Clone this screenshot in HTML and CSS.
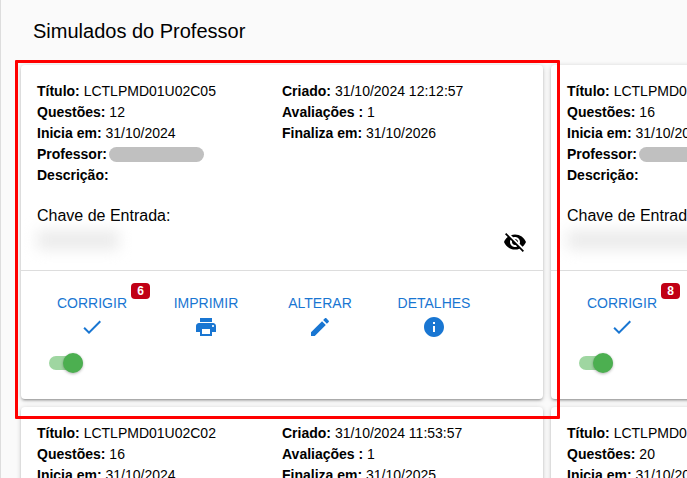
FILE: index.html
```
<!DOCTYPE html>
<html lang="pt-BR">
<head>
  <meta charset="utf-8">
  <meta name="viewport" content="width=device-width, initial-scale=1.0">
  <title>Simulados do Professor</title>
  <link rel="stylesheet" href="styles.css">
</head>
<body>
  <!-- shared icons -->
  <svg class="sprite" aria-hidden="true">
    <symbol id="icon-check" viewBox="0 0 24 24"><path d="M9 16.17L4.83 12l-1.42 1.41L9 19 21 7l-1.41-1.41z"/></symbol>
    <symbol id="icon-print" viewBox="0 0 24 24"><path d="M19 8H5c-1.66 0-3 1.34-3 3v6h4v4h12v-4h4v-6c0-1.66-1.34-3-3-3zm-3 11H8v-5h8v5zm3-7c-.55 0-1-.45-1-1s.45-1 1-1 1 .45 1 1-.45 1-1 1zm-1-9H6v4h12V3z"/></symbol>
    <symbol id="icon-edit" viewBox="0 0 24 24"><path d="M3 17.25V21h3.75L17.81 9.94l-3.75-3.75L3 17.25zM20.71 7.04c.39-.39.39-1.02 0-1.41l-2.34-2.34c-.39-.39-1.02-.39-1.41 0l-1.83 1.83 3.75 3.75 1.83-1.83z"/></symbol>
    <symbol id="icon-info" viewBox="0 0 24 24"><path d="M12 2C6.48 2 2 6.48 2 12s4.48 10 10 10 10-4.48 10-10S17.52 2 12 2zm1 15h-2v-6h2v6zm0-8h-2V7h2v2z"/></symbol>
    <symbol id="icon-hidden" viewBox="0 0 24 24"><path d="M12 7c2.76 0 5 2.24 5 5 0 .65-.13 1.26-.36 1.83l2.92 2.92c1.51-1.26 2.7-2.89 3.43-4.75-1.73-4.39-6-7.5-11-7.5-1.4 0-2.74.25-3.98.7l2.16 2.16C10.74 7.13 11.35 7 12 7zM2 4.27l2.28 2.28.46.46C3.08 8.3 1.78 10.02 1 12c1.73 4.39 6 7.5 11 7.5 1.55 0 3.03-.3 4.38-.84l.42.42L19.73 22 21 20.73 3.27 3 2 4.27zM7.53 9.8l1.55 1.55c-.05.21-.08.43-.08.65 0 1.66 1.34 3 3 3 .22 0 .44-.03.65-.08l1.55 1.55c-.67.33-1.41.53-2.2.53-2.76 0-5-2.24-5-5 0-.79.2-1.53.53-2.2zm4.31-.78l3.15 3.15.02-.16c0-1.66-1.34-3-3-3l-.17.01z"/></symbol>
  </svg>

  <main class="page">
    <h1 class="page-title">Simulados do Professor</h1>

    <div class="card-grid">
      <article class="card card-highlight">
        <div class="card-body">
          <div class="info">
            <div>
              <p><b>Título:</b> LCTLPMD01U02C05</p>
              <p><b>Questões:</b> 12</p>
              <p><b>Inicia em:</b> 31/10/2024</p>
              <p class="teacher"><b>Professor:</b><span class="redacted"></span></p>
              <p><b>Descrição:</b></p>
            </div>
            <div>
              <p><b>Criado:</b> 31/10/2024 12:12:57</p>
              <p><b>Avaliações :</b> 1</p>
              <p><b>Finaliza em:</b> 31/10/2026</p>
            </div>
          </div>
          <p class="key-label">Chave de Entrada:</p>
          <div class="key-row">
            <span class="key-value"></span>
            <button class="icon-button" type="button" aria-label="Mostrar chave"><svg class="icon"><use href="#icon-hidden"/></svg></button>
          </div>
        </div>
        <div class="card-actions">
          <div class="actions">
            <button class="action" type="button">CORRIGIR<svg class="icon"><use href="#icon-check"/></svg><span class="badge">6</span></button>
            <button class="action" type="button">IMPRIMIR<svg class="icon"><use href="#icon-print"/></svg></button>
            <button class="action" type="button">ALTERAR<svg class="icon"><use href="#icon-edit"/></svg></button>
            <button class="action" type="button">DETALHES<svg class="icon"><use href="#icon-info"/></svg></button>
          </div>
          <label class="toggle"><input class="toggle-input" type="checkbox" aria-label="Ativo" checked></label>
        </div>
      </article>

      <article class="card">
        <div class="card-body">
          <div class="info">
            <div>
              <p><b>Título:</b> LCTLPMD01U02C04</p>
              <p><b>Questões:</b> 16</p>
              <p><b>Inicia em:</b> 31/10/2024</p>
              <p class="teacher"><b>Professor:</b><span class="redacted"></span></p>
              <p><b>Descrição:</b></p>
            </div>
          </div>
          <p class="key-label">Chave de Entrada:</p>
          <div class="key-row">
            <span class="key-value key-value-long"></span>
            <button class="icon-button" type="button" aria-label="Mostrar chave"><svg class="icon"><use href="#icon-hidden"/></svg></button>
          </div>
        </div>
        <div class="card-actions">
          <div class="actions">
            <button class="action" type="button">CORRIGIR<svg class="icon"><use href="#icon-check"/></svg><span class="badge">8</span></button>
          </div>
          <label class="toggle"><input class="toggle-input" type="checkbox" aria-label="Ativo" checked></label>
        </div>
      </article>

      <article class="card">
        <div class="card-body">
          <div class="info">
            <div>
              <p><b>Título:</b> LCTLPMD01U02C02</p>
              <p><b>Questões:</b> 16</p>
              <p><b>Inicia em:</b> 31/10/2024</p>
            </div>
            <div>
              <p><b>Criado:</b> 31/10/2024 11:53:57</p>
              <p><b>Avaliações :</b> 1</p>
              <p><b>Finaliza em:</b> 31/10/2025</p>
            </div>
          </div>
        </div>
      </article>

      <article class="card">
        <div class="card-body">
          <div class="info">
            <div>
              <p><b>Título:</b> LCTLPMD01U02C01</p>
              <p><b>Questões:</b> 20</p>
              <p><b>Inicia em:</b> 31/10/2024</p>
            </div>
          </div>
        </div>
      </article>
    </div>
  </main>
</body>
</html>
```
FILE: styles.css
```
* {
  box-sizing: border-box;
}

body {
  margin: 0;
  background-color: #fafafa;
  color: #000;
  font-family: "Liberation Sans", Arial, sans-serif;
  font-size: 14px;
  line-height: 21px;
  overflow: hidden;
}

h1, p {
  margin: 0;
}

button {
  padding: 0;
  border: none;
  background: none;
  color: inherit;
  font: inherit;
  cursor: pointer;
}

.sprite {
  display: none;
}

.page {
  min-height: 100vh;
  padding: 19px 20px 20px;
  border-left: 1px solid #ddd;
}

.page-title {
  margin-bottom: 22px;
  padding-left: 12px;
  font-size: 20px;
  font-weight: normal;
  line-height: 24px;
}

.card-grid {
  display: grid;
  grid-template-columns: repeat(2, minmax(522px, 1fr));
  gap: 8px;
}

.card {
  position: relative;
  background-color: #fff;
  border-radius: 4px;
  box-shadow: 0 1px 5px rgba(0, 0, 0, 0.2), 0 2px 2px rgba(0, 0, 0, 0.14), 0 3px 1px -2px rgba(0, 0, 0, 0.12);
}

/* red frame over the selected card */
.card-highlight::after {
  content: "";
  position: absolute;
  z-index: 1;
  top: -5px;
  right: -17px;
  bottom: -20px;
  left: -6px;
  border: 3px solid #f00;
  border-radius: 1px;
  pointer-events: none;
}

.card-body {
  padding: 16px;
}

.info {
  display: grid;
  grid-template-columns: 1fr 1fr;
}

.teacher {
  display: flex;
  align-items: center;
  gap: 2px;
}

.redacted {
  width: 95px;
  height: 15px;
  border-radius: 8px;
  background-color: #c0c0c0;
}

.key-label {
  margin-top: 18px;
  font-size: 16px;
  line-height: 24px;
}

.key-row {
  display: flex;
  align-items: flex-start;
  justify-content: space-between;
  padding-top: 2px;
}

.key-value {
  width: 82px;
  height: 20px;
  background-color: #ececec;
  filter: blur(7px);
}

.key-value-long {
  width: 160px;
}

.icon {
  display: block;
  width: 24px;
  height: 24px;
  fill: currentColor;
}

.card-actions {
  padding: 20px 14px 16px;
  border-top: 1px solid #ddd;
}

.actions {
  display: grid;
  grid-template-columns: repeat(4, 114px);
}

.action {
  position: relative;
  display: flex;
  flex-direction: column;
  align-items: center;
  color: #1976d2;
  line-height: 24px;
}

.badge {
  position: absolute;
  top: -8px;
  right: -1px;
  min-width: 19px;
  padding: 0 6px;
  border-radius: 4px;
  background-color: #c10015;
  color: #fff;
  font-size: 12px;
  font-weight: bold;
  line-height: 16px;
}

.toggle {
  display: flex;
  align-items: center;
  width: 34px;
  height: 40px;
  margin: 4px 0 0 14px;
}

.toggle-input {
  position: relative;
  appearance: none;
  width: 34px;
  height: 14px;
  margin: 0;
  border-radius: 7px;
  background-color: #9fd6a1;
}

.toggle-input::before {
  content: "";
  position: absolute;
  top: -3px;
  left: 0;
  width: 20px;
  height: 20px;
  border-radius: 50%;
  background-color: #fff;
  box-shadow: 0 1px 3px rgba(0, 0, 0, 0.3);
}

.toggle-input:checked::before {
  left: 14px;
  background-color: #4caf50;
}
```
